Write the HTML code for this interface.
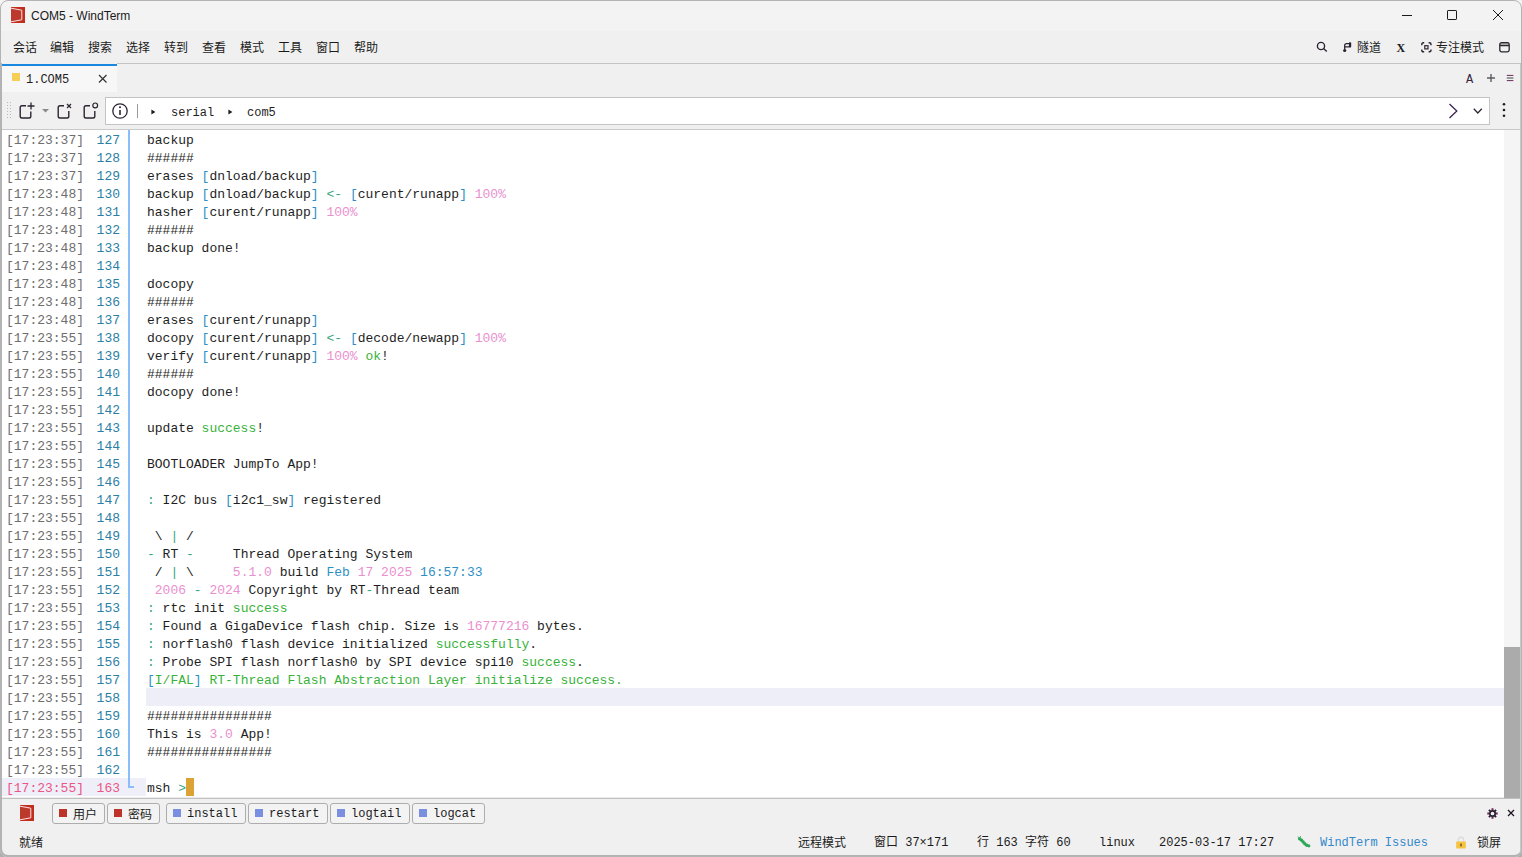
<!DOCTYPE html>
<html lang="zh-CN">
<head>
<meta charset="utf-8">
<title>COM5 - WindTerm</title>
<style>
*{box-sizing:border-box;margin:0;padding:0}
html,body{width:1522px;height:857px;overflow:hidden;background:linear-gradient(#f4f4f4 0,#f4f4f4 50%,#adb0b2 50%,#adb0b2 100%)}
body{position:relative;font-family:"Liberation Sans","Noto Sans CJK SC",sans-serif;font-size:12px;color:#1b1b1b}
.abs{position:absolute}
#win{position:absolute;left:0;top:0;width:1522px;height:857px;background:#f0f0f0;overflow:hidden;border-radius:8px}
#winb{position:absolute;left:0;top:0;width:1522px;height:857px;border:1px solid #b4b4b4;border-radius:8px;pointer-events:none;z-index:10}
/* title bar */
#title{position:absolute;left:0;top:0;width:1522px;height:31px;background:#f3f3f3}
#title .name{position:absolute;left:31px;top:8px;font-size:12px;line-height:16px;color:#1a1a1a;white-space:nowrap}
/* menu */
#menu{position:absolute;left:0;top:32px;width:1522px;height:31px;background:#f0f0f0}
#menu .mi{position:absolute;top:8px;font-size:12px;line-height:16px;color:#1b1b1b;white-space:nowrap;font-family:"Liberation Sans","Noto Sans CJK SC",sans-serif}
#menusep{position:absolute;left:117px;top:63px;width:1405px;height:1px;background:#c4c4c4}
#frame{position:absolute;left:0;top:63px;width:1522px;height:794px;border:2px solid #b2b2b2;border-top:0;border-right:1px solid #b0b0b0;border-radius:0 0 8px 8px;pointer-events:none;z-index:9}
/* tab bar */
#tabs{position:absolute;left:0;top:64px;width:1522px;height:29px;background:#f0f0f0}
#tab1{position:absolute;left:2px;top:0;width:115px;height:28px;background:#f7f7f7;border-top:2px solid #1888e0}
.mono{font-family:"Liberation Mono","Noto Sans CJK SC",monospace}
/* toolbar */
#tool{position:absolute;left:0;top:93px;width:1522px;height:36px;background:#f0f0f0}
#addr{position:absolute;left:105px;top:4px;width:1385px;height:28px;background:#fff;border:1px solid #c4c4c4}
#toolsep{position:absolute;left:0;top:129px;width:1522px;height:1px;background:#c9c9c9}
/* terminal */
#term{position:absolute;left:2px;top:130px;width:1502px;height:667px;background:#fff;overflow:hidden}
#term .row{position:relative;height:18px;line-height:18px;font-family:"Liberation Mono",monospace;font-size:13px;white-space:pre;color:#1e1e1e}
#term .ts{position:absolute;left:4px;top:2px;color:#6e6e6e}
#term .ln{position:absolute;left:86px;top:2px;width:32px;text-align:right;color:#2b7fa6}
#term .tx{position:absolute;left:145px;top:2px}
#term .row.hl::before{content:"";position:absolute;left:144px;top:0;right:0;height:18px;background:#eeeef8}
#term .row.last::before{content:"";position:absolute;left:0;top:0;width:144px;height:18px;background:#efeff9}
#term .row.last .ts,#term .row.last .ln{color:#ec5585}
#gline{position:absolute;left:126px;top:0;width:2px;height:657px;background:#8bbcfb}
#ghook{position:absolute;left:126px;top:656px;width:6px;height:1.5px;background:#8bbcfb}
.b{color:#2e8fc4}.p{color:#ea8fcf}.t{color:#34a87c}.g{color:#38b23a}
.cur{position:absolute;display:block;width:8px;height:18px;background:#dca233;top:-2px;left:39px}
#vsb{z-index:2;position:absolute;left:1504px;top:130px;width:16px;height:668px;background:#f5f5f5}
#vsb i{position:absolute;left:0;top:517px;width:16px;height:151px;background:#ababab}
#termsep{position:absolute;left:0;top:797px;width:1522px;height:3px;background:linear-gradient(#ececec 0,#ececec 1px,#c0c0c0 1px,#c0c0c0 2px,#c8c8c8 2px,#c8c8c8 3px)}
/* quick bar */
#quick{position:absolute;left:0;top:799px;width:1522px;height:29px;background:#f0f0f0}
.qb{position:absolute;top:4px;height:21px;border:1px solid #adadad;border-radius:3px;background:#f3f3f3;font-size:12px;line-height:19px;white-space:nowrap;color:#1b1b1b}
.qb i{position:absolute;left:6px;top:5px;width:8px;height:8px}
.qb i.r{background:#be3428}.qb i.v{background:#7b8fe0}
.qb span{position:absolute;left:20px;top:2px}
.qb.mono span{top:1px}
/* status */
#status{position:absolute;left:0;top:828px;width:1522px;height:29px;background:#f0f0f0}
#status .si{position:absolute;top:7px;line-height:16px;white-space:nowrap;color:#1b1b1b}
</style>
</head>
<body>
<div id="win">
<div id="title">
<svg class="abs" style="left:9px;top:7px" width="17" height="17" viewBox="0 0 17 17"><rect x="2" y="0" width="14" height="16" fill="#c22e1e"/><path d="M2 1.4L12.8 3.3V12.7L2 14.6Z" fill="#bb3a2b"/><path d="M0.4 0.9L12.8 3.2V12.8L0.4 15.1" fill="none" stroke="#fddfe6" stroke-width="1"/></svg>
<div class="name">COM5 - WindTerm</div>
<svg class="abs" style="left:1380px;top:0" width="142" height="32" viewBox="0 0 142 32" fill="none" stroke="#1a1a1a" stroke-width="1">
<path d="M22 15.5H32"/>
<rect x="67.5" y="10.5" width="9" height="9" rx="0.6"/>
<path d="M113 10L123 20M123 10L113 20"/>
</svg>
</div>
<div id="menu">
<div class="mi" style="left:13px">会话</div>
<div class="mi" style="left:50px">编辑</div>
<div class="mi" style="left:88px">搜索</div>
<div class="mi" style="left:126px">选择</div>
<div class="mi" style="left:164px">转到</div>
<div class="mi" style="left:202px">查看</div>
<div class="mi" style="left:240px">模式</div>
<div class="mi" style="left:278px">工具</div>
<div class="mi" style="left:316px">窗口</div>
<div class="mi" style="left:354px">帮助</div>
<svg class="abs" style="left:1316px;top:9px" width="12" height="12" viewBox="0 0 12 12" fill="none" stroke="#2d2433" stroke-width="1.4"><circle cx="5" cy="5" r="3.6"/><path d="M7.6 7.6L10.8 10.6"/></svg>
<svg class="abs" style="left:1342px;top:10px" width="11" height="11" viewBox="0 0 11 11" fill="none" stroke="#2d2433" stroke-width="1.3"><path d="M2.7 8V3.4Q2.7 1.7 4.4 1.7H7.5M2.7 4.9H7.5"/><rect x="6.9" y="0.2" width="2.3" height="5.3" rx="0.8" fill="#2d2433" stroke="none"/><circle cx="2.7" cy="8.5" r="1.6" fill="#2d2433" stroke="none"/></svg>
<div class="mi" style="left:1357px">隧道</div>
<div class="mi" style="left:1396.5px;top:8px;font-family:'Liberation Serif',serif;font-weight:bold;font-size:12px">X</div>
<svg class="abs" style="left:1420.5px;top:10px" width="11" height="11" viewBox="0 0 11 11" fill="none" stroke="#2d2433" stroke-width="1.4"><path d="M0.8 3.2V2.3Q0.8 0.8 2.3 0.8H3.2M7.6 0.8H8.5Q10 0.8 10 2.3V3.2M10 7.4V8.3Q10 9.8 8.5 9.8H7.6M3.2 9.8H2.3Q0.8 9.8 0.8 8.3V7.4"/><rect x="3.8" y="3.7" width="3.2" height="3.2" stroke-width="1.2"/></svg>
<div class="mi" style="left:1436px">专注模式</div>
<svg class="abs" style="left:1498.5px;top:10px" width="11" height="11" viewBox="0 0 11 11" fill="none" stroke="#2d2433" stroke-width="1.3"><rect x="1" y="0.8" width="9" height="2.8" fill="#a8a8a8" stroke="none"/><rect x="0.8" y="0.7" width="9.4" height="9.2" rx="1.8"/><path d="M0.8 3.7H10.2"/></svg>
</div>
<div id="menusep"></div>
<div id="tabs">
<div id="tab1"></div>
<i class="abs" style="left:12px;top:9px;width:8px;height:8px;background:#f5cf55"></i>
<div class="abs mono" style="left:26px;top:8px;font-size:12px;line-height:16px;color:#1e1e1e">1.COM5</div>
<svg class="abs" style="left:98px;top:10px" width="10" height="10" viewBox="0 0 10 10" fill="none" stroke="#333" stroke-width="1.2"><path d="M1 1L8.5 8.5M8.5 1L1 8.5"/></svg>
<div class="abs mono" style="left:1466px;top:8px;font-size:12px;line-height:16px;color:#33263f">A</div>
<svg class="abs" style="left:1486px;top:9px" width="10" height="10" viewBox="0 0 10 10" fill="none" stroke="#5d5a62" stroke-width="1.4"><path d="M5 1V9M1 5H9"/></svg>
<svg class="abs" style="left:1506px;top:10px" width="8" height="8" viewBox="0 0 8 8" fill="none" stroke="#6a2a5a" stroke-width="1"><path d="M0.8 1.4H7.4M0.8 6.6H7.4"/><path d="M0.8 4H7.4" stroke="#7a7f7a" stroke-width="1.6"/></svg>
</div>
<div id="tool">
<div id="addr"></div>
<svg class="abs" style="left:6px;top:8px" width="6" height="18" viewBox="0 0 6 18" fill="#b9b9b9"><g id="dots"></g><rect x="1" y="1" width="1" height="1"/><rect x="4" y="1" width="1" height="1"/><rect x="1" y="4" width="1" height="1"/><rect x="4" y="4" width="1" height="1"/><rect x="1" y="7" width="1" height="1"/><rect x="4" y="7" width="1" height="1"/><rect x="1" y="10" width="1" height="1"/><rect x="4" y="10" width="1" height="1"/><rect x="1" y="13" width="1" height="1"/><rect x="4" y="13" width="1" height="1"/><rect x="1" y="16" width="1" height="1"/><rect x="4" y="16" width="1" height="1"/></svg>
<svg class="abs" style="left:18px;top:8px" width="18" height="19" viewBox="0 0 18 19" fill="none" stroke="#2d2433" stroke-width="1.4"><path d="M8 4.7H4Q2.2 4.7 2.2 6.5V15.2Q2.2 17 4 17H11Q12.8 17 12.8 15.2V10.5"/><path d="M13 1.5V8.5M9.5 5H16.5" stroke-width="1.3"/></svg>
<svg class="abs" style="left:42px;top:16px" width="7" height="4" viewBox="0 0 7 4"><path d="M0 0H7L3.5 3.6Z" fill="#8a8a8a"/></svg>
<svg class="abs" style="left:56px;top:8px" width="18" height="19" viewBox="0 0 18 19" fill="none" stroke="#2d2433" stroke-width="1.4"><path d="M8 4.7H4Q2.2 4.7 2.2 6.5V15.2Q2.2 17 4 17H11Q12.8 17 12.8 15.2V10"/><path d="M11 3L15 7M15 3L11 7" stroke-width="1.2"/></svg>
<svg class="abs" style="left:82px;top:8px" width="18" height="19" viewBox="0 0 18 19" fill="none" stroke="#2d2433" stroke-width="1.4"><path d="M8 4.7H4Q2.2 4.7 2.2 6.5V15.2Q2.2 17 4 17H11Q12.8 17 12.8 15.2V10"/><circle cx="13.2" cy="4.4" r="2.4" stroke-width="1.2"/></svg>
<svg class="abs" style="left:111px;top:9px" width="18" height="18" viewBox="0 0 18 18" fill="none" stroke="#2d2433" stroke-width="1.3"><circle cx="9" cy="9" r="7.2"/><path d="M9 8V13" stroke-width="1.6"/><circle cx="9" cy="5.3" r="1" fill="#2d2433" stroke="none"/></svg>
<i class="abs" style="left:137px;top:11px;width:1px;height:14px;background:#9a9a9a"></i>
<svg class="abs" style="left:151px;top:15px" width="5" height="7" viewBox="0 0 5 7"><path d="M0.4 1.4L4.4 4L0.4 6.6Z" fill="#1e1e1e"/></svg>
<div class="abs mono" style="left:171px;top:12px;font-size:12px;line-height:16px;color:#1e1e1e">serial</div>
<svg class="abs" style="left:228px;top:15px" width="5" height="7" viewBox="0 0 5 7"><path d="M0.4 1.4L4.4 4L0.4 6.6Z" fill="#1e1e1e"/></svg>
<div class="abs mono" style="left:247px;top:12px;font-size:12px;line-height:16px;color:#1e1e1e">com5</div>
<svg class="abs" style="left:1448px;top:10px" width="10" height="16" viewBox="0 0 10 16" fill="none" stroke="#3c2350" stroke-width="1.3"><path d="M1.5 1L8.8 8L1.5 15"/></svg>
<svg class="abs" style="left:1473px;top:15px" width="10" height="7" viewBox="0 0 10 7" fill="none" stroke="#2d2433" stroke-width="1.3"><path d="M0.8 0.8L4.8 5L8.8 0.8"/></svg>
<svg class="abs" style="left:1502px;top:9px" width="4" height="16" viewBox="0 0 4 16" fill="#1e1e1e"><circle cx="2" cy="2.3" r="1.3"/><circle cx="2" cy="8" r="1.3"/><circle cx="2" cy="13.7" r="1.3"/></svg>
</div>
<div id="toolsep"></div>
<div id="term">
<div class="row"><span class="ts">[17:23:37]</span><span class="ln">127</span><span class="tx">backup</span></div>
<div class="row"><span class="ts">[17:23:37]</span><span class="ln">128</span><span class="tx">######</span></div>
<div class="row"><span class="ts">[17:23:37]</span><span class="ln">129</span><span class="tx">erases <span class="b">[</span>dnload/backup<span class="b">]</span></span></div>
<div class="row"><span class="ts">[17:23:48]</span><span class="ln">130</span><span class="tx">backup <span class="b">[</span>dnload/backup<span class="b">]</span> <span class="t"><-</span> <span class="b">[</span>curent/runapp<span class="b">]</span> <span class="p">100%</span></span></div>
<div class="row"><span class="ts">[17:23:48]</span><span class="ln">131</span><span class="tx">hasher <span class="b">[</span>curent/runapp<span class="b">]</span> <span class="p">100%</span></span></div>
<div class="row"><span class="ts">[17:23:48]</span><span class="ln">132</span><span class="tx">######</span></div>
<div class="row"><span class="ts">[17:23:48]</span><span class="ln">133</span><span class="tx">backup done!</span></div>
<div class="row"><span class="ts">[17:23:48]</span><span class="ln">134</span><span class="tx"></span></div>
<div class="row"><span class="ts">[17:23:48]</span><span class="ln">135</span><span class="tx">docopy</span></div>
<div class="row"><span class="ts">[17:23:48]</span><span class="ln">136</span><span class="tx">######</span></div>
<div class="row"><span class="ts">[17:23:48]</span><span class="ln">137</span><span class="tx">erases <span class="b">[</span>curent/runapp<span class="b">]</span></span></div>
<div class="row"><span class="ts">[17:23:55]</span><span class="ln">138</span><span class="tx">docopy <span class="b">[</span>curent/runapp<span class="b">]</span> <span class="t"><-</span> <span class="b">[</span>decode/newapp<span class="b">]</span> <span class="p">100%</span></span></div>
<div class="row"><span class="ts">[17:23:55]</span><span class="ln">139</span><span class="tx">verify <span class="b">[</span>curent/runapp<span class="b">]</span> <span class="p">100%</span> <span class="g">ok</span>!</span></div>
<div class="row"><span class="ts">[17:23:55]</span><span class="ln">140</span><span class="tx">######</span></div>
<div class="row"><span class="ts">[17:23:55]</span><span class="ln">141</span><span class="tx">docopy done!</span></div>
<div class="row"><span class="ts">[17:23:55]</span><span class="ln">142</span><span class="tx"></span></div>
<div class="row"><span class="ts">[17:23:55]</span><span class="ln">143</span><span class="tx">update <span class="g">success</span>!</span></div>
<div class="row"><span class="ts">[17:23:55]</span><span class="ln">144</span><span class="tx"></span></div>
<div class="row"><span class="ts">[17:23:55]</span><span class="ln">145</span><span class="tx">BOOTLOADER JumpTo App!</span></div>
<div class="row"><span class="ts">[17:23:55]</span><span class="ln">146</span><span class="tx"></span></div>
<div class="row"><span class="ts">[17:23:55]</span><span class="ln">147</span><span class="tx"><span class="t">:</span> I2C bus <span class="b">[</span>i2c1_sw<span class="b">]</span> registered</span></div>
<div class="row"><span class="ts">[17:23:55]</span><span class="ln">148</span><span class="tx"></span></div>
<div class="row"><span class="ts">[17:23:55]</span><span class="ln">149</span><span class="tx"> \ <span class="t">|</span> /</span></div>
<div class="row"><span class="ts">[17:23:55]</span><span class="ln">150</span><span class="tx"><span class="t">-</span> RT <span class="t">-</span>     Thread Operating System</span></div>
<div class="row"><span class="ts">[17:23:55]</span><span class="ln">151</span><span class="tx"> / <span class="t">|</span> \     <span class="p">5.1.0</span> build <span class="b">Feb</span> <span class="p">17 2025</span> <span class="b">16:57:33</span></span></div>
<div class="row"><span class="ts">[17:23:55]</span><span class="ln">152</span><span class="tx"> <span class="p">2006</span> <span class="t">-</span> <span class="p">2024</span> Copyright by RT<span class="t">-</span>Thread team</span></div>
<div class="row"><span class="ts">[17:23:55]</span><span class="ln">153</span><span class="tx"><span class="t">:</span> rtc init <span class="g">success</span></span></div>
<div class="row"><span class="ts">[17:23:55]</span><span class="ln">154</span><span class="tx"><span class="t">:</span> Found a GigaDevice flash chip. Size is <span class="p">16777216</span> bytes.</span></div>
<div class="row"><span class="ts">[17:23:55]</span><span class="ln">155</span><span class="tx"><span class="t">:</span> norflash0 flash device initialized <span class="g">successfully</span>.</span></div>
<div class="row"><span class="ts">[17:23:55]</span><span class="ln">156</span><span class="tx"><span class="t">:</span> Probe SPI flash norflash0 by SPI device spi10 <span class="g">success</span>.</span></div>
<div class="row"><span class="ts">[17:23:55]</span><span class="ln">157</span><span class="tx"><span class="b">[</span><span class="g">I/FAL</span><span class="b">]</span> <span class="g">RT-Thread Flash Abstraction Layer initialize success.</span></span></div>
<div class="row hl"><span class="ts">[17:23:55]</span><span class="ln">158</span><span class="tx"></span></div>
<div class="row"><span class="ts">[17:23:55]</span><span class="ln">159</span><span class="tx">################</span></div>
<div class="row"><span class="ts">[17:23:55]</span><span class="ln">160</span><span class="tx">This is <span class="p">3.0</span> App!</span></div>
<div class="row"><span class="ts">[17:23:55]</span><span class="ln">161</span><span class="tx">################</span></div>
<div class="row"><span class="ts">[17:23:55]</span><span class="ln">162</span><span class="tx"></span></div>
<div class="row last"><span class="ts">[17:23:55]</span><span class="ln">163</span><span class="tx">msh <span class="t">&gt;</span><i class="cur"></i></span></div>
<div id="gline"></div><div id="ghook"></div>
</div>
<div id="vsb"><i></i></div>
<div id="termsep"></div>
<div id="quick">
<svg class="abs" style="left:18px;top:6px" width="17" height="17" viewBox="0 0 17 17"><rect x="2" y="0" width="14" height="16" fill="#c22e1e"/><path d="M2 1.4L12.8 3.3V12.7L2 14.6Z" fill="#bb3a2b"/><path d="M0.4 0.9L12.8 3.2V12.8L0.4 15.1" fill="none" stroke="#fddfe6" stroke-width="1"/></svg>
<div class="qb" style="left:52px;width:53px"><i class="r"></i><span>用户</span></div>
<div class="qb" style="left:107px;width:53px"><i class="r"></i><span>密码</span></div>
<div class="qb mono" style="left:166px;width:80px"><i class="v"></i><span>install</span></div>
<div class="qb mono" style="left:248px;width:80px"><i class="v"></i><span>restart</span></div>
<div class="qb mono" style="left:330px;width:80px"><i class="v"></i><span>logtail</span></div>
<div class="qb mono" style="left:412px;width:73px"><i class="v"></i><span>logcat</span></div>
<svg class="abs" style="left:1486.6px;top:8.5px" width="11" height="11" viewBox="0 0 11 11" fill="none"><path d="M5.5 0.3V2.5M5.5 8.5V10.7M0.3 5.5H2.5M8.5 5.5H10.7" stroke="#6a2060" stroke-width="2"/><path d="M1.9 1.9L3.4 3.4M7.6 7.6L9.1 9.1M9.1 1.9L7.6 3.4M3.4 7.6L1.9 9.1" stroke="#2a2030" stroke-width="1.8"/><circle cx="5.5" cy="5.5" r="2.7" stroke="#2d2233" stroke-width="1.7"/></svg>
<svg class="abs" style="left:1507px;top:10px" width="8" height="8" viewBox="0 0 8 8" fill="none" stroke="#1e1424" stroke-width="1.3"><path d="M1 1L7 7M7 1L1 7"/></svg>
</div>
<div id="status">
<div class="si" style="left:19px">就绪</div>
<div class="si" style="left:798px">远程模式</div>
<div class="si mono" style="left:874px">窗口 37×171</div>
<div class="si mono" style="left:977px">行 163 字符 60</div>
<div class="si mono" style="left:1099px">linux</div>
<div class="si mono" style="left:1159px">2025-03-17 17:27</div>
<svg class="abs" style="left:1297px;top:8px" width="14" height="12" viewBox="0 0 14 12"><g fill="#2fa858"><circle cx="2.6" cy="2.8" r="1.7"/><circle cx="4.6" cy="4.2" r="1.7"/><circle cx="6.2" cy="6" r="1.7"/><circle cx="7.8" cy="7.8" r="1.7"/><circle cx="9.8" cy="9.2" r="1.7"/><circle cx="11.8" cy="9.8" r="1.6"/></g><path d="M1.8 1.4L0.6 0.3M3.2 1.2L3.8 0" stroke="#2fa858" stroke-width="0.8"/></svg>
<div class="si mono" style="left:1320px;color:#3388cc">WindTerm Issues</div>
<svg class="abs" style="left:1455px;top:8px" width="12" height="13" viewBox="0 0 12 13"><path d="M3.3 6V4Q3.3 1.3 6 1.3T8.7 4V6" fill="none" stroke="#dcdcdc" stroke-width="1.4"/><rect x="1.2" y="5.6" width="9.6" height="7" rx="0.8" fill="#f5c242"/><rect x="5.3" y="7.6" width="1.4" height="2.8" fill="#6b4a1a"/></svg>
<div class="si" style="left:1477px">锁屏</div>
</div>
</div>
<div id="frame"></div>
<i class="abs" style="left:1520px;top:64px;width:1px;height:786px;background:#c8c8c8;z-index:9"></i>
<div id="winb"></div>
</body>
</html>
